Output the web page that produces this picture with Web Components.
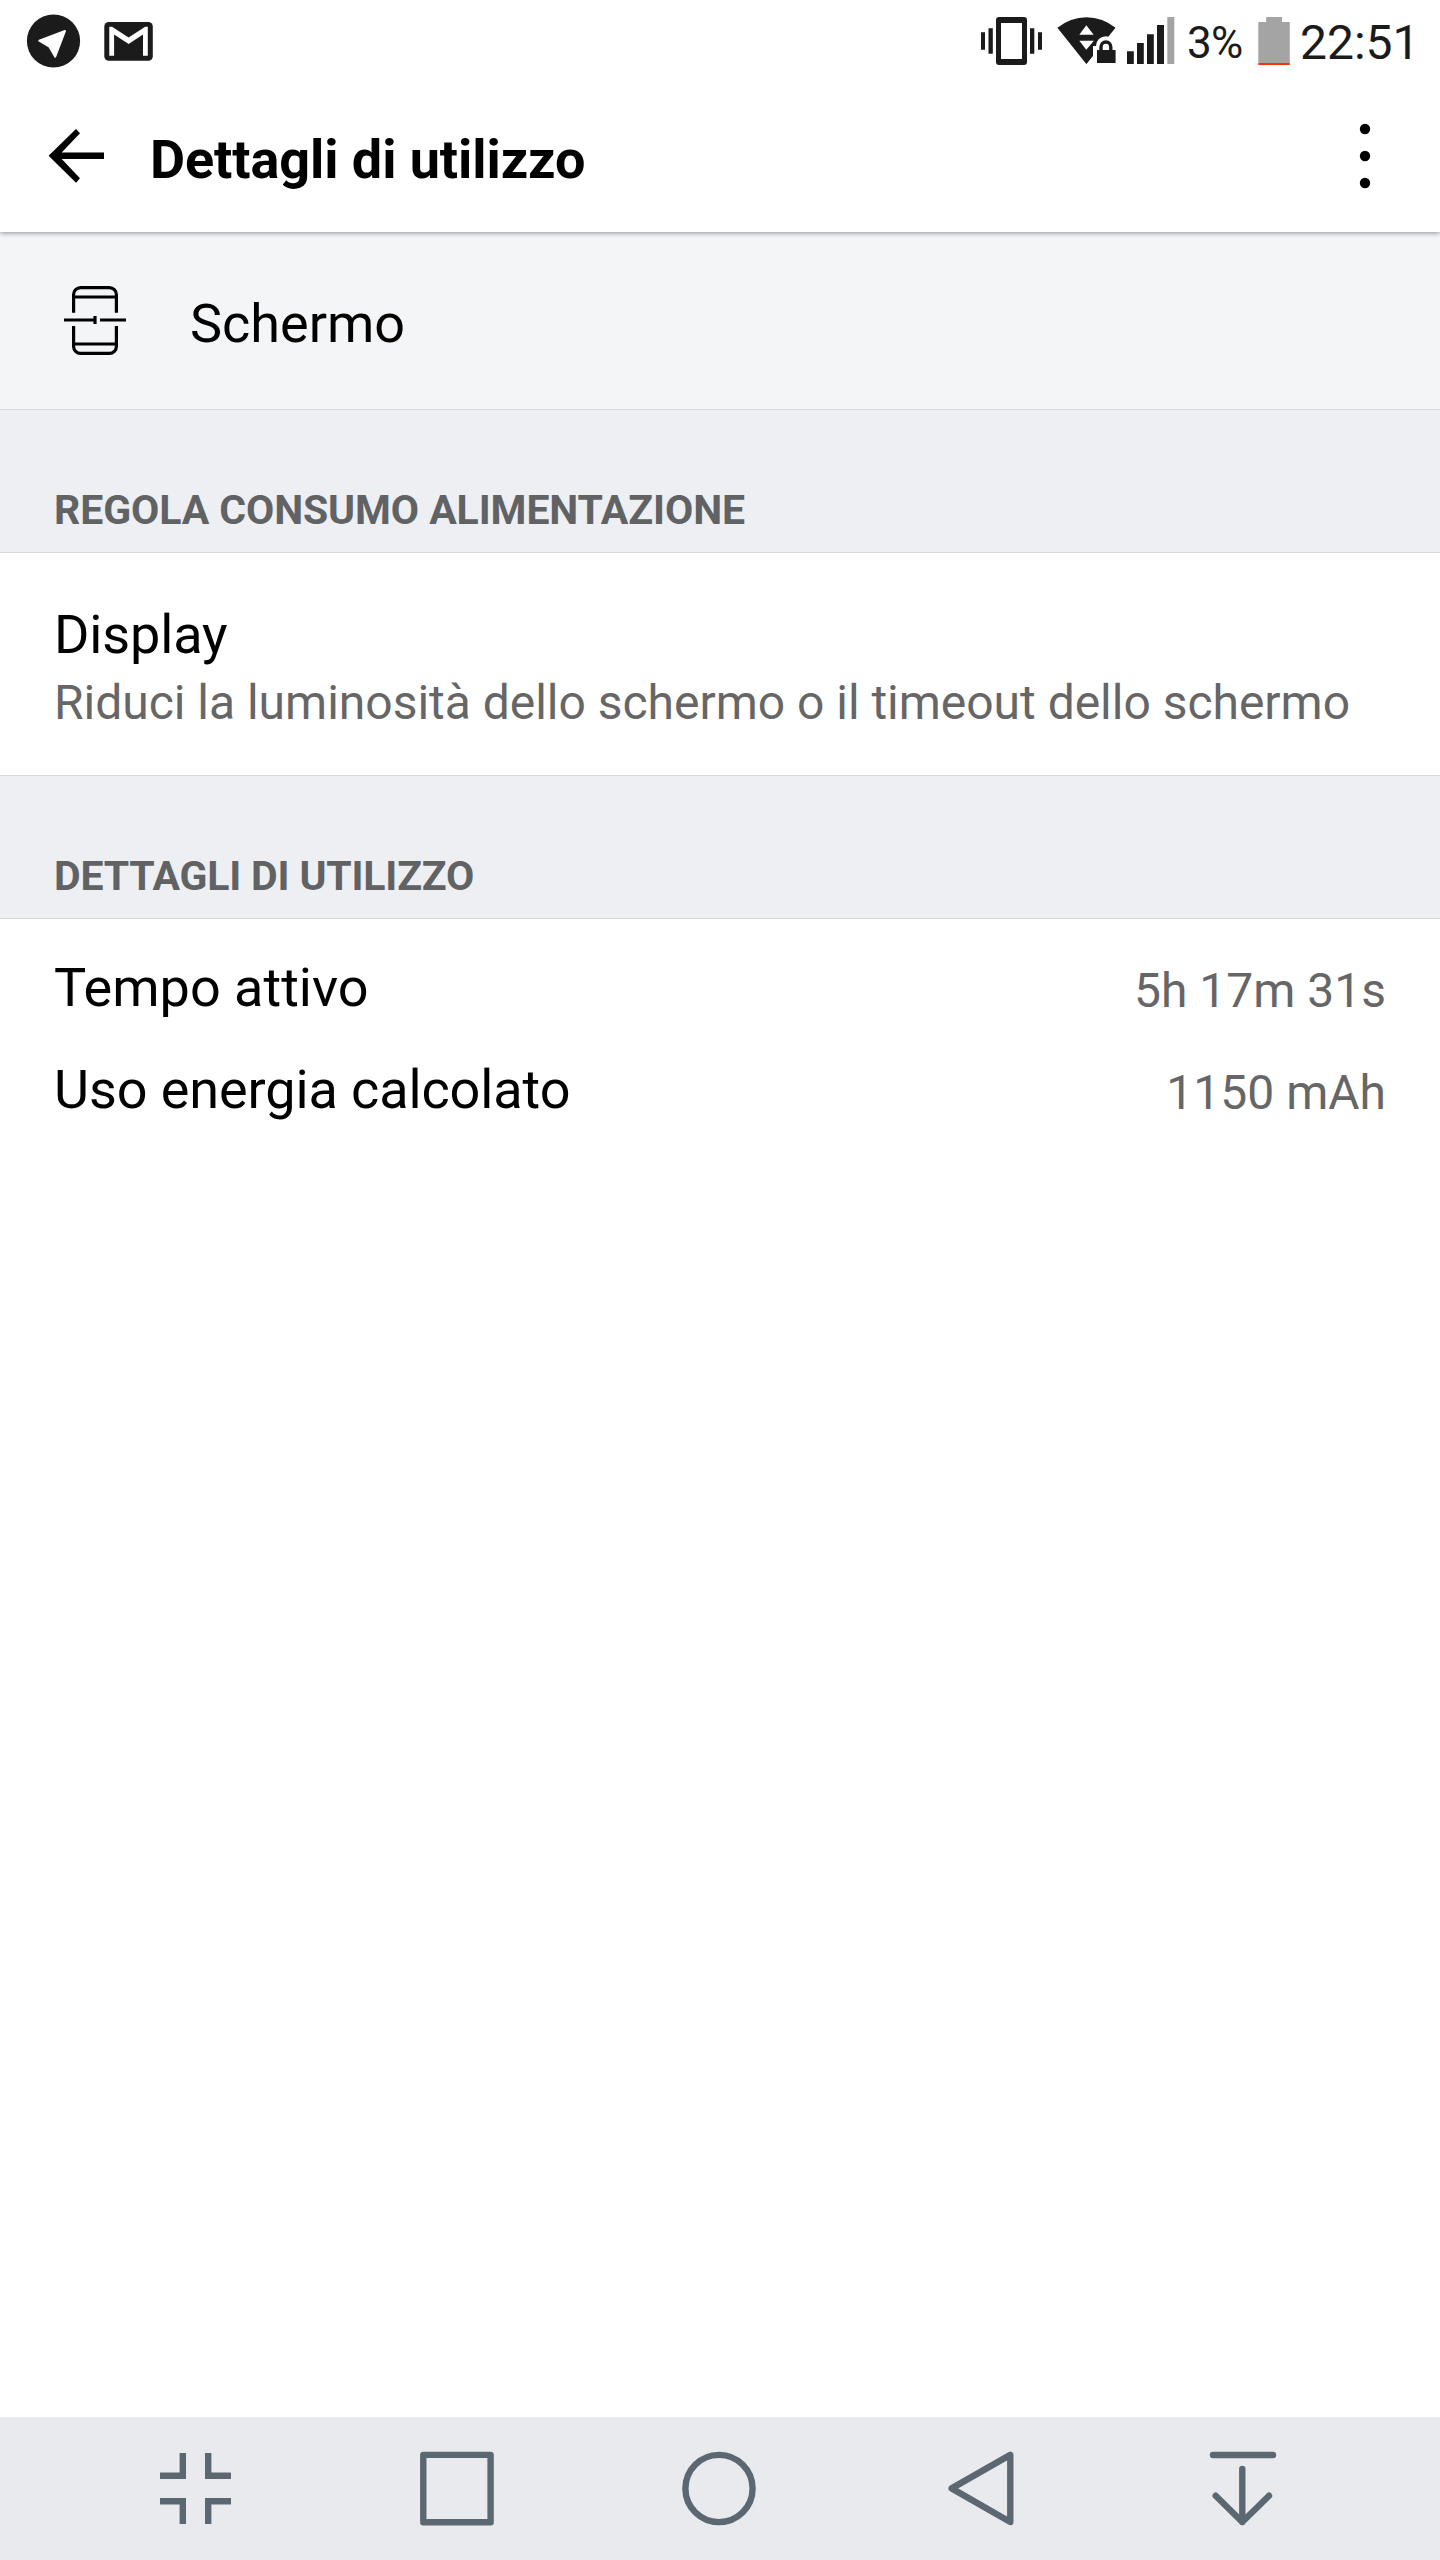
<!DOCTYPE html>
<html lang="it">
<head>
<meta charset="utf-8">
<title>Dettagli di utilizzo</title>
<style>
html,body{margin:0;padding:0;background:#fff}
body{font-family:Roboto,"Liberation Sans",sans-serif;color:#000}
</style>
</head>
<body>
<usage-screen></usage-screen>
<script>
const define=(name,html)=>{
  const t=document.createElement('template');
  t.innerHTML=html;
  customElements.define(name,class extends HTMLElement{
    constructor(){super();this.attachShadow({mode:'open'}).append(t.content.cloneNode(true));}
  });
};

define('status-bar',`
<style>
:host{display:flex;height:84px;background:#fff;color:#1b1b1b}
svg{display:block;flex:none}
.gap{flex:1}
.pct{font-size:44px;line-height:86px;width:72px;letter-spacing:-.8px;white-space:nowrap}
.time{font-size:48px;line-height:86px;width:140px;padding-left:1px;white-space:nowrap}
</style>
<svg width="180" height="84" viewBox="0 0 180 84">
  <circle cx="53.5" cy="41" r="26.6" fill="#1b1b1b"/>
  <path d="M65 31 55.2 56.7 49.3 46.6 39.3 40.7Z" fill="#fff" stroke="#fff" stroke-width="2" stroke-linejoin="round"/>
  <rect x="104.3" y="22" width="48.5" height="38.7" rx="4.5" fill="#1b1b1b"/>
  <path d="M109.3 26.8H112L128.6 37.6 145.2 26.8H147.8V55.8H143V34.5L128.6 43.9 114.1 34.5V55.8H109.3Z" fill="#fff"/>
</svg>
<span class="gap"></span>
<svg width="217" height="84" viewBox="970 0 217 84" fill="#1b1b1b">
  <path fill-rule="evenodd" d="M999 17h25a3 3 0 0 1 3 3v42a3 3 0 0 1-3 3h-25a3 3 0 0 1-3-3v-42a3 3 0 0 1 3-3ZM1001 23v36h21v-36Z"/>
  <path d="M981 32.3h4v17.4h-4ZM988.5 28.3h4.3v25.4h-4.3ZM1030 28.3h4.3v25.4h-4.3ZM1038 32.3h4v17.4h-4Z"/>
  <path d="M1086.3 64 1057.4 27.8A45 45 0 0 1 1115.5 27.8Z"/>
  <path fill="#fff" d="M1086.3 25.3 1093.7 34.7H1079.3ZM1079.3 40.7H1093.9L1086.3 49.7Z"/>
  <path fill="#fff" d="M1093 66V46h3a9.8 9.8 0 0 1 19.6 0h3v20Z"/>
  <path d="M1086.3 64 1093 55.6V48L1086 52Z"/>
  <path d="M1097 50h18.6v13h-18.6Z"/>
  <path fill="none" stroke="#1b1b1b" stroke-width="3.4" d="M1101 51v-4.1a4.9 4.9 0 0 1 9.8 0V51"/>
  <path d="M1127 51.3h6.8V64h-6.8ZM1137 43h6.8v21h-6.8ZM1147 34.2h6.8V64h-6.8ZM1157 25h7v39h-7Z"/>
  <path fill="#a4a4a4" d="M1167.3 17h7v47h-7Z"/>
</svg>
<span class="pct">3%</span>
<svg width="40" height="84" viewBox="1259 0 40 84" style="overflow:visible">
  <path fill="#a4a4a4" d="M1258.3 22h7.9v-5h15.8v5h7.8v41h-31.5Z"/>
  <path fill="#ff3300" d="M1258.3 63h31.5v2h-31.5Z"/>
</svg>
<span class="time">22:51</span>`);

define('app-header',`
<style>
:host{display:flex;height:148px;background:#fff;position:relative;box-shadow:0 1px 5px rgba(0,0,0,.42);clip-path:inset(0 0 -12px 0)}
svg{display:block;flex:none}
h1{margin:0;flex:1;font-size:54px;font-weight:700;line-height:151px;letter-spacing:-.08px;white-space:nowrap}
</style>
<svg width="150" height="148" viewBox="0 84 150 148"><path d="M48.6 155.7 76 129 80 133.3 61.7 152.4H104V159H61.7L80 178.3 76 182.7Z"/></svg>
<h1><slot></slot></h1>
<svg width="150" height="148" viewBox="1290 84 150 148"><circle cx="1365" cy="129" r="5.2"/><circle cx="1365" cy="156" r="5.2"/><circle cx="1365" cy="183" r="5.2"/></svg>`);

define('subject-row',`
<style>
:host{display:flex;height:177px;background:#f4f5f7;border-bottom:1px solid #d7d8d9}
svg{display:block;flex:none}
span{font-size:54px;line-height:184px}
</style>
<svg width="190" height="177" viewBox="0 232 190 177" fill="none" stroke="#000" stroke-width="3.2">
  <path d="M73.6 312.7V294.6a7 7 0 0 1 7-7h28.8a7 7 0 0 1 7 7V312.7M73.6 326V346.4a7 7 0 0 0 7 7h28.8a7 7 0 0 0 7-7V326M73.6 297H116.4M73.6 344H116.4M64 320H95M100 320H126M95 316V324"/>
</svg>
<span><slot></slot></span>`);

define('section-title',`
<style>
:host{display:block;box-sizing:border-box;height:143px;padding:75px 54px 0;background:#eeeff3;border-bottom:1px solid #d7d8d9;color:#616264;font-size:41px;font-weight:700;line-height:50px;letter-spacing:var(--tracking,0);white-space:nowrap}
</style><slot></slot>`);

define('setting-item',`
<style>
:host{display:block;box-sizing:border-box;height:223px;padding:47px 54px 0;background:#fff;border-bottom:1px solid #d7d8d9;white-space:nowrap}
.t{display:block;font-size:54px;line-height:70px;letter-spacing:-.15px}
.s{display:block;font-size:48px;line-height:66px;letter-spacing:-.02px;color:#666}
</style><span class="t"><slot></slot></span><span class="s"><slot name="summary"></slot></span>`);

define('detail-row',`
<style>
:host{display:flex;justify-content:space-between;height:102px;padding:0 54px;white-space:nowrap}
.l{font-size:54px;line-height:102px;letter-spacing:var(--tracking,0)}
.v{font-size:48px;line-height:108px;color:#666}
</style><span class="l"><slot></slot></span><span class="v"><slot name="value"></slot></span>`);

define('nav-bar',`
<style>
:host{display:flex;height:143px;padding-left:64px;background:#e9eaee}
svg{display:block;flex:none;fill:none;stroke:#5c6871;stroke-width:6.4;stroke-linejoin:round;stroke-linecap:round}
.c{stroke-linecap:butt;stroke-linejoin:miter}
</style>
<svg class="c" width="262" height="143" viewBox="64 2417 262 143"><path d="M160 2475.8H182.8V2453M208.2 2453V2475.8H231M160 2501.2H182.8V2524M208.2 2524V2501.2H231"/></svg>
<svg width="262" height="143" viewBox="326 2417 262 143"><path d="M423.3 2454.9H490.6V2522.3H423.3Z"/></svg>
<svg width="262" height="143" viewBox="588 2417 262 143"><circle cx="719" cy="2488.5" r="33.6"/></svg>
<svg width="262" height="143" viewBox="850 2417 262 143"><path d="M951.6 2488.4 1010.3 2454.9V2522Z"/></svg>
<svg width="262" height="143" viewBox="1112 2417 262 143"><path d="M1213 2455H1273M1242.3 2469V2522M1215.7 2495.7 1242.3 2522 1269 2495.7"/></svg>`);

define('usage-screen',`
<style>
:host{display:flex;flex-direction:column;width:1440px;height:2560px;background:#fff}
main{flex:1}
.rows{padding-top:18px}
.power{--tracking:-.09px}
.usage{--tracking:-.17px}
.energy{--tracking:-.1px}
</style>
<status-bar></status-bar>
<app-header>Dettagli di utilizzo</app-header>
<main>
  <subject-row>Schermo</subject-row>
  <section-title class="power">REGOLA CONSUMO ALIMENTAZIONE</section-title>
  <setting-item>Display<span slot="summary">Riduci la luminosità dello schermo o il timeout dello schermo</span></setting-item>
  <section-title class="usage">DETTAGLI DI UTILIZZO</section-title>
  <div class="rows">
    <detail-row>Tempo attivo<span slot="value">5h 17m 31s</span></detail-row>
    <detail-row class="energy">Uso energia calcolato<span slot="value">1150 mAh</span></detail-row>
  </div>
</main>
<nav-bar></nav-bar>`);
</script>
</body>
</html>
